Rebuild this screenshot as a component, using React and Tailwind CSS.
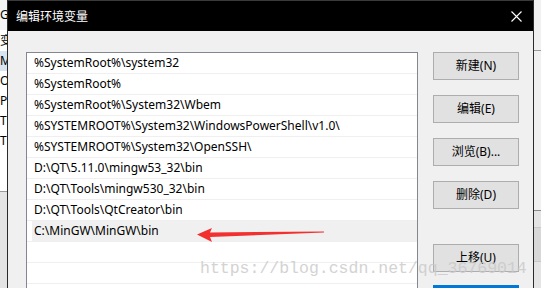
import React from 'react';

const paths = [
  '%SystemRoot%\\system32',
  '%SystemRoot%',
  '%SystemRoot%\\System32\\Wbem',
  '%SYSTEMROOT%\\System32\\WindowsPowerShell\\v1.0\\',
  '%SYSTEMROOT%\\System32\\OpenSSH\\',
  'D:\\QT\\5.11.0\\mingw53_32\\bin',
  'D:\\QT\\Tools\\mingw530_32\\bin',
  'D:\\QT\\Tools\\QtCreator\\bin',
];

const font = { fontFamily: '"Noto Sans", "Noto Sans CJK SC", sans-serif' };

const Btn = ({ children, className = '' }) => (
  <button className={`w-[86px] h-[28px] shrink-0 bg-[#e1e1e1] border border-[#adadad] text-[12px] text-black leading-none ${className}`}>
    {children}
  </button>
);

const App = () => {
  return (
    <div className="relative w-[541px] h-[288px] overflow-hidden bg-[#f0f0f0] flex text-black" style={font}>
      {/* background window, left */}
      <div className="w-[7px] h-full shrink-0 bg-white flex flex-col text-[12px] leading-none overflow-hidden">
        <div className="h-[30px] shrink-0 pt-[9px] bg-[#f4f4f4]">G</div>
        <div className="h-[21px] shrink-0 pt-[5px]">变</div>
        <div className="h-[20px] shrink-0 pt-[4px] bg-[#d9e4f1]">M</div>
        <div className="h-[20px] shrink-0 pt-[4px]">O</div>
        <div className="h-[20px] shrink-0 pt-[4px]">Pa</div>
        <div className="h-[20px] shrink-0 pt-[4px]">TE</div>
        <div className="h-[20px] shrink-0 pt-[4px]">TM</div>
        <div className="flex-1 mt-[40px] border-t border-[#9a9a9a] bg-[#e4e4e4]"></div>
      </div>
      <div className="w-[1px] h-full shrink-0 bg-[#2a2a2a]"></div>

      {/* dialog */}
      <div className="w-[525px] h-full shrink-0 flex flex-col">
        <div className="h-[31px] shrink-0 bg-black border-t border-[#3a3a3a] flex items-center justify-between pl-[8px] pr-[11px]">
          <span className="text-white text-[12px] leading-none" style={{ fontFamily: '"Noto Sans CJK SC", sans-serif' }}>编辑环境变量</span>
          <svg width="11" height="11" viewBox="0 0 11 11">
            <path d="M0.5 0.5 L10.5 10.5 M10.5 0.5 L0.5 10.5" stroke="#fff" strokeWidth="1.1" />
          </svg>
        </div>
        <div className="flex-1 min-h-0 flex pl-[18px] pt-[21px]">
          {/* list */}
          <div className="w-[392px] h-[260px] shrink-0 bg-white border-l border-t border-r border-[#828790] flex flex-col">
            {paths.map((p) => (
              <div key={p} className="h-[21px] shrink-0 border-b border-[#efefef] pl-[7px] flex items-center text-[12px]">
                {p}
              </div>
            ))}
            <div className="h-[21px] shrink-0 border-b border-[#efefef] pl-[5px] flex">
              <div className="flex-1 bg-[#f0f0f0] pl-[2px] flex items-center text-[12px]">C:\MinGW\MinGW\bin</div>
            </div>
            <div className="h-[21px] shrink-0 border-b border-[#efefef]"></div>
            <div className="h-[21px] shrink-0 border-b border-[#efefef]"></div>
          </div>
          {/* buttons */}
          <div className="ml-[15px] flex flex-col gap-[15px]">
            <Btn>新建(N)</Btn>
            <Btn>编辑(E)</Btn>
            <Btn>浏览(B)...</Btn>
            <Btn>删除(D)</Btn>
            <Btn className="mt-[20px]">上移(U)</Btn>
            <div className="w-[86px] h-[4px] shrink-0 bg-[#0078d7] -mt-[2px]"></div>
          </div>
        </div>
      </div>
      <div className="w-[1px] h-full shrink-0 bg-[#2a2a2a]"></div>

      {/* background window, right */}
      <div className="flex-1 h-full bg-[#f0f0f0] flex flex-col">
        <div className="h-[50px] shrink-0"></div>
        <div className="h-[2px] shrink-0 border-t border-[#9a9a9a]"></div>
        <div className="h-[158px] shrink-0"></div>
        <div className="h-[17px] shrink-0 border-t border-[#8a8a8a] bg-[#e4e4e4]"></div>
        <div className="h-[34px] shrink-0 border-t border-[#c8c8c8] bg-[#d8d8d8]"></div>
        <div className="flex-1 border-t border-[#c8c8c8] bg-[#e4e4e4]"></div>
      </div>

      {/* red arrow annotation */}
      <svg className="absolute left-[196px] top-[226px]" width="130" height="18" viewBox="0 0 130 18">
        <path d="M1 8.5 L16 2 L14 6.5 L128 5.5 L128 6.5 L14 11 L16 16 Z" fill="#f2302f" />
      </svg>

      {/* watermark */}
      <div
        className="absolute left-[200px] top-[257px] text-[16.5px] text-[#c9c9c9] opacity-80 whitespace-nowrap pointer-events-none"
        style={{ fontFamily: '"Liberation Mono", monospace' }}
      >
        https://blog.csdn.net/qq_36769014
      </div>
    </div>
  );
};

export default App;
